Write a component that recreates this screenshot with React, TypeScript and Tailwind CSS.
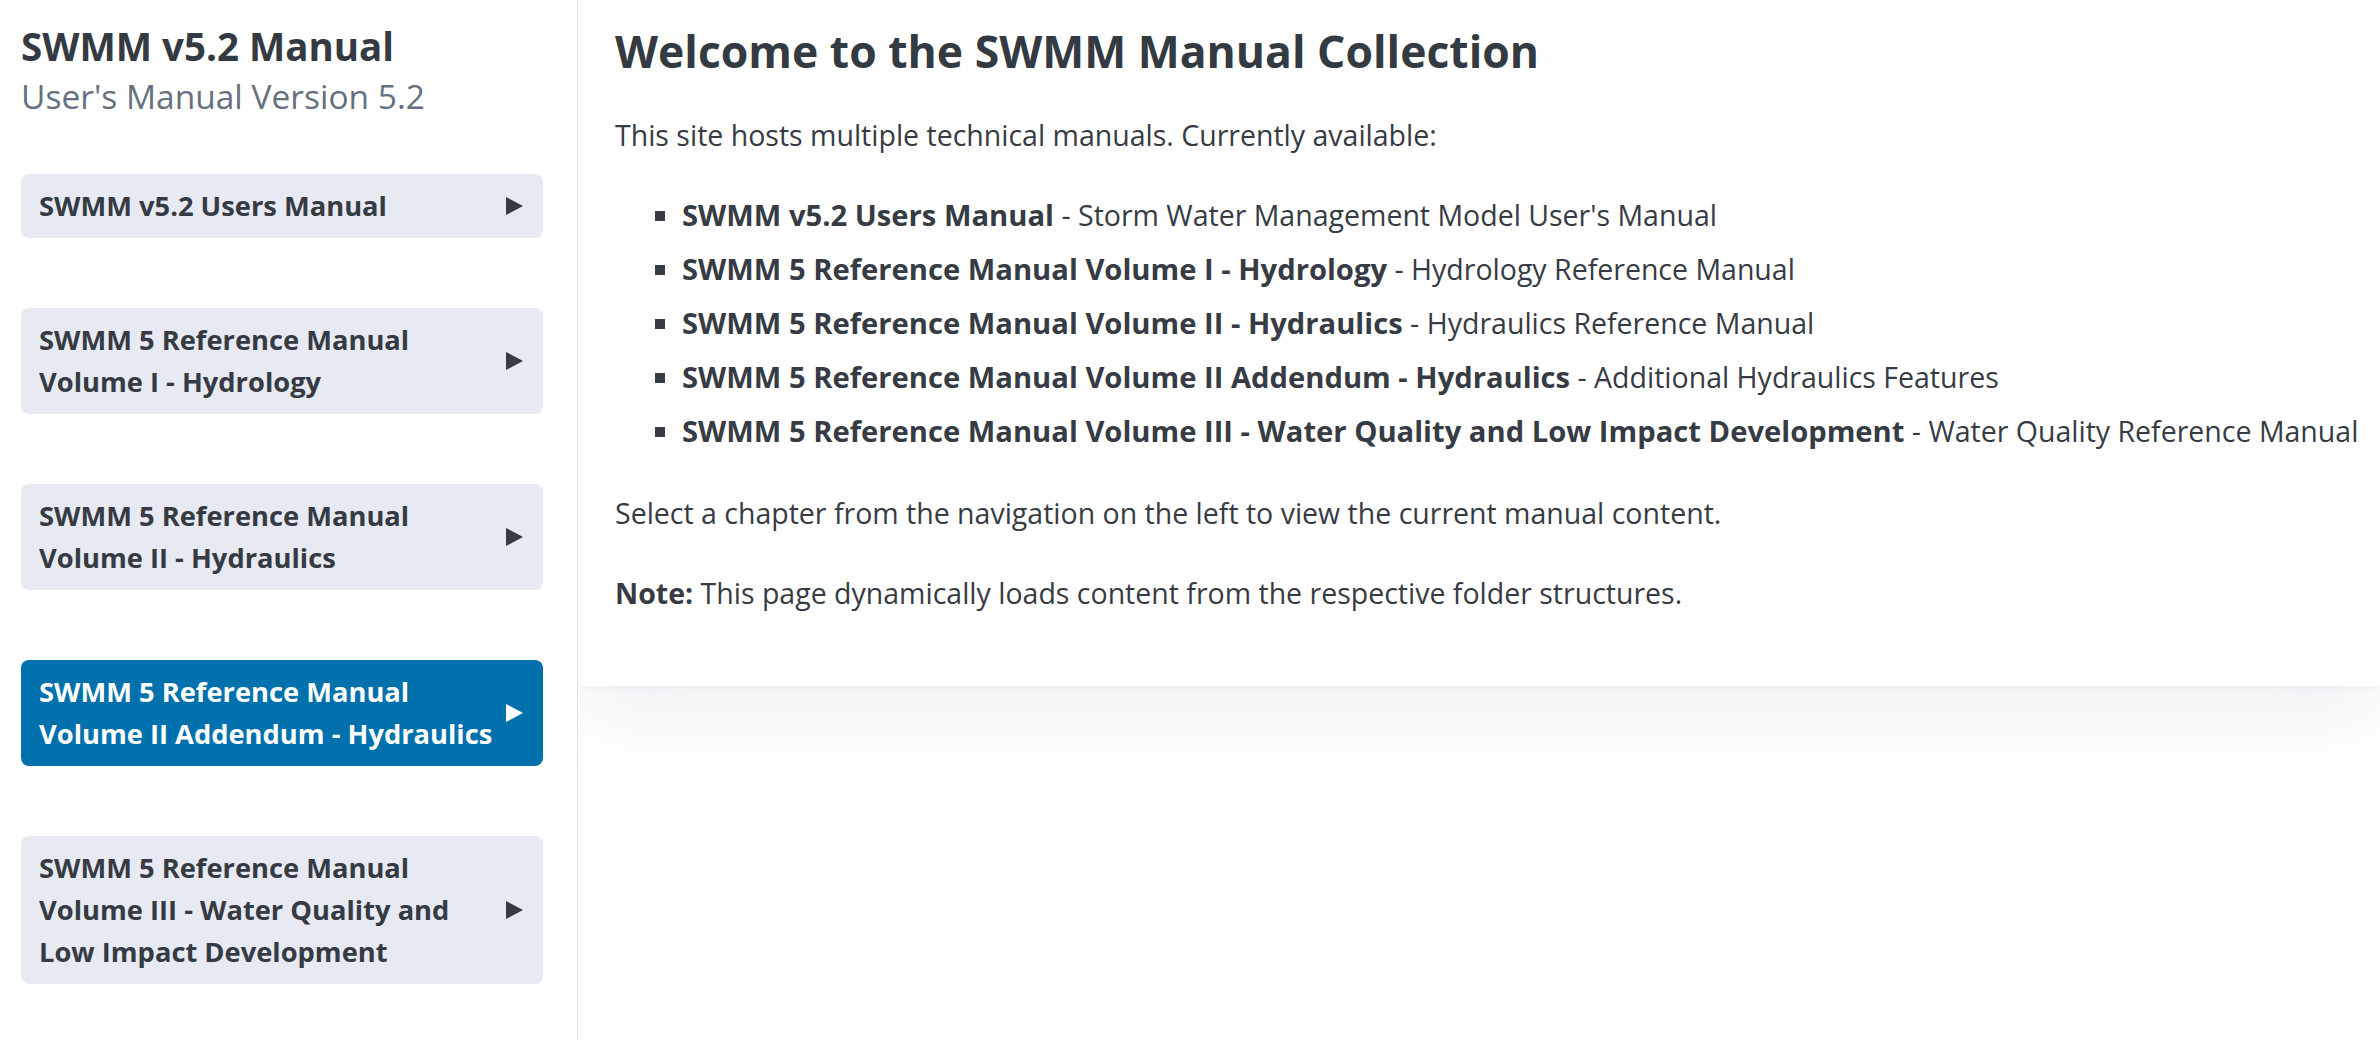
import React from 'react';

type Manual = {
  lines: string[];
  title: string;
  desc: string;
  active?: boolean;
};

const manuals: Manual[] = [
  { lines: ['SWMM v5.2 Users Manual'], title: 'SWMM v5.2 Users Manual', desc: "Storm Water Management Model User's Manual" },
  { lines: ['SWMM 5 Reference Manual', 'Volume I - Hydrology'], title: 'SWMM 5 Reference Manual Volume I - Hydrology', desc: 'Hydrology Reference Manual' },
  { lines: ['SWMM 5 Reference Manual', 'Volume II - Hydraulics'], title: 'SWMM 5 Reference Manual Volume II - Hydraulics', desc: 'Hydraulics Reference Manual' },
  { lines: ['SWMM 5 Reference Manual', 'Volume II Addendum - Hydraulics'], title: 'SWMM 5 Reference Manual Volume II Addendum - Hydraulics', desc: 'Additional Hydraulics Features', active: true },
  { lines: ['SWMM 5 Reference Manual', 'Volume III - Water Quality and', 'Low Impact Development'], title: 'SWMM 5 Reference Manual Volume III - Water Quality and Low Impact Development', desc: 'Water Quality Reference Manual' },
];

function Arrow() {
  return (
    <svg width="18" height="18" viewBox="0 0 18 18" className="shrink-0 fill-current">
      <polygon points="1,0 18,9 1,18" />
    </svg>
  );
}

function NavButton({ m }: { m: Manual }) {
  return (
    <button
      className={`w-[522px] flex items-center justify-between gap-3 rounded-lg pl-[18px] pr-[20px] py-[11px] text-left text-[27.3px] font-bold leading-[42px] ${
        m.active ? 'bg-[#0071ad] text-white' : 'bg-[#e7eaf2] text-[#353a43]'
      }`}
    >
      <span className="flex flex-col">
        {m.lines.map((l) => (
          <span key={l} className="whitespace-nowrap">{l}</span>
        ))}
      </span>
      <Arrow />
    </button>
  );
}

export default function App() {
  return (
    <div className="flex min-h-screen bg-white font-['Open_Sans',sans-serif] text-[#363b44]">
      {/* Sidebar */}
      <aside className="relative z-10 w-[578px] shrink-0 border-r border-[#e4e6ee] bg-white pl-[21px] pt-[24px]">
        <h1 className="text-[38.5px] font-bold leading-[44px] text-[#343a42]">SWMM v5.2 Manual</h1>
        <p className="mt-2 text-[33.5px] leading-[40px] text-[#64707f]">User's Manual Version 5.2</p>
        <nav className="mt-[58px] flex flex-col gap-[70px]">
          {manuals.map((m) => (
            <NavButton key={m.title} m={m} />
          ))}
        </nav>
      </aside>

      {/* Main */}
      <main className="flex-1 min-w-0">
        <div className="rounded-bl-md bg-white pl-[37px] pr-[20px] pt-[24px] pb-[72px] shadow-[0_24px_90px_rgba(40,40,90,0.075),0_2px_6px_rgba(40,40,90,0.045)]">
          <h2 className="text-[44.5px] font-bold leading-[54px] text-[#343a42]">Welcome to the SWMM Manual Collection</h2>
          <p className="mt-[36px] text-[28.5px] leading-[42px]">This site hosts multiple technical manuals. Currently available:</p>
          <ul className="mt-[38px] flex list-[square] flex-col gap-[12px] pl-[67px] text-[28.5px] leading-[42px]">
            {manuals.map((m) => (
              <li key={m.title} className="whitespace-nowrap">
                <strong className="text-[29.2px] font-bold">{m.title}</strong> - {m.desc}
              </li>
            ))}
          </ul>
          <p className="mt-[40px] text-[28.5px] leading-[42px]">Select a chapter from the navigation on the left to view the current manual content.</p>
          <p className="mt-[38px] text-[28.5px] leading-[42px]">
            <strong className="font-bold">Note:</strong> This page dynamically loads content from the respective folder structures.
          </p>
        </div>
      </main>
    </div>
  );
}
